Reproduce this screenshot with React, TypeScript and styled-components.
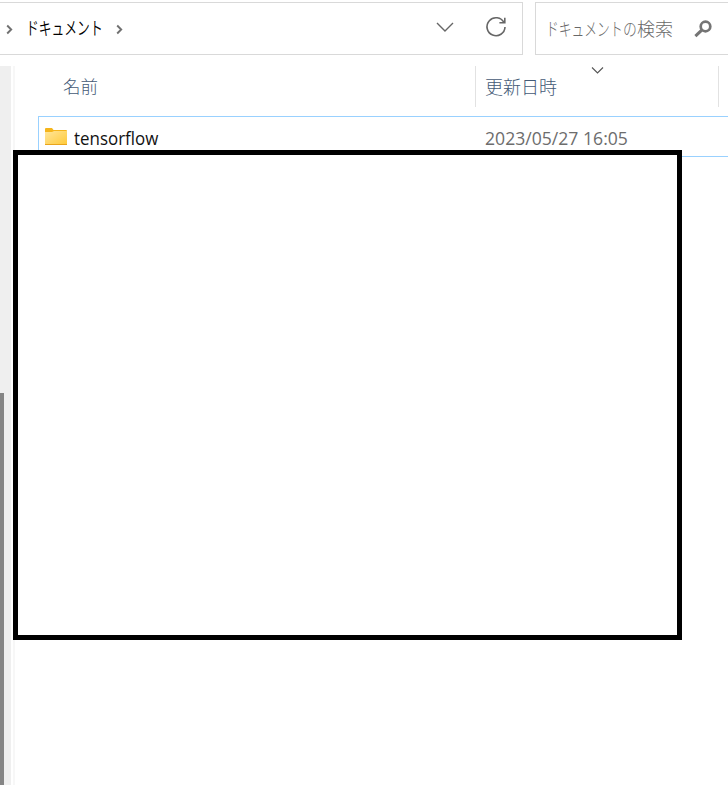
import React from "react";
import styled, { createGlobalStyle } from "styled-components";

const GlobalStyle = createGlobalStyle`
  * { box-sizing: border-box; }
  body { margin: 0; background: #fff; overflow: hidden; }
`;

const Explorer = styled.main`
  position: relative;
  width: 728px;
  height: 785px;
  padding-top: 2px;
  display: flex;
  flex-direction: column;
  overflow: hidden;
  background: #fff;
  font-family: "Open Sans", "Noto Sans", "Noto Sans CJK JP", sans-serif;
`;

const Toolbar = styled.header`
  display: flex;
  gap: 12px;
  height: 53px;
  flex: none;
`;

const AddressBar = styled.nav`
  width: 523px;
  flex: none;
  display: flex;
  align-items: center;
  border: 1px solid #d9d9d9;
  border-left: 0;
  padding: 0 16px 0 6px;
`;

const SearchBox = styled.div`
  flex: 1;
  display: flex;
  align-items: center;
  border: 1px solid #d9d9d9;
  border-right: 0;
  padding-left: 10px;
`;

const Label = styled.span<{
  $size: number;
  $color: string;
  $width: number;
  $scale?: number;
  $weight?: number;
}>`
  display: block;
  flex: none;
  width: ${(p) => p.$width}px;
  font-size: ${(p) => p.$size}px;
  line-height: 24px;
  font-weight: ${(p) => p.$weight ?? 400};
  color: ${(p) => p.$color};
  white-space: nowrap;
  transform: scaleX(${(p) => p.$scale ?? 1});
  transform-origin: left center;
`;

const JapaneseLabel = styled(Label)`
  font-family: "Noto Sans CJK JP", sans-serif;
`;

const Placeholder = styled.div`
  display: flex;
  width: 148px;
  flex: none;
  padding-bottom: 2px;
`;

const Icon = styled.svg`
  display: block;
  flex: none;
  fill: none;
  overflow: visible;
`;

const Crumb = styled.div`
  display: flex;
  align-items: center;
  gap: 13px;
  flex: 1;
`;

const CrumbName = styled(JapaneseLabel)`
  margin-bottom: 4px;
`;

const Actions = styled.div`
  display: flex;
  align-items: center;
  gap: 32px;
  padding-bottom: 4px;
`;

const Body = styled.div`
  flex: 1;
  display: flex;
  margin-top: 11px;
`;

const ScrollTrack = styled.div`
  width: 11px;
  padding-top: 327px;
  background: #efefef;
`;

const ScrollThumb = styled.div`
  width: 4px;
  height: 100%;
  background: #858585;
`;

const PaneDivider = styled.div`
  width: 2px;
  margin-left: 2px;
  background: #f7f7f7;
`;

const FileList = styled.section`
  flex: 1;
  padding-left: 23px;
`;

const Columns = styled.div`
  display: grid;
  grid-template-columns: 438px 243px 1fr;
  height: 41px;
`;

const ColumnHeader = styled.div`
  position: relative;
  display: flex;
  align-items: center;
  border-right: 1px solid #e2e2e2;
  padding-bottom: 1px;

  &:first-child { padding-left: 25px; }
  &:nth-child(2) { padding-left: 9px; }
  &:last-child { border: 0; }
`;

const SortMark = styled(Icon)`
  position: absolute;
  left: 116px;
  top: 1px;
`;

const FileRow = styled.div`
  display: grid;
  grid-template-columns: 446px 1fr;
  align-items: center;
  height: 41px;
  margin-top: 9px;
  border: 1px solid #99d1ff;
  border-right: 0;
  padding-top: 3px;
`;

const FileName = styled.div`
  display: flex;
  align-items: center;
  gap: 7px;
  padding-left: 6px;
`;

const FolderIcon = styled(Icon)`
  margin-top: -3px;
`;

const Cover = styled.div`
  position: absolute;
  left: 13px;
  top: 150px;
  width: 669px;
  height: 490px;
  border: 5px solid #000;
  background: #fff;
`;

const Chevron = () => (
  <Icon width="7" height="10" viewBox="0 0 7 10">
    <path d="M1.2 1.5 5.2 5.5 1.2 9.5" stroke="#707070" strokeWidth="1.9" />
  </Icon>
);

export default function App() {
  return (
    <>
      <GlobalStyle />
      <Explorer>
        <Toolbar>
          <AddressBar>
            <Crumb>
              <Chevron />
              <CrumbName $size={18} $color="#000" $width={77} $scale={0.71} $weight={350}>
                ドキュメント
              </CrumbName>
              <Chevron />
            </Crumb>
            <Actions>
              <Icon width="18" height="10" viewBox="0 0 18 10">
                <path d="M1 1 9 9 17 1" stroke="#666" strokeWidth="1.4" />
              </Icon>
              <Icon width="20" height="20" viewBox="0 0 20 20">
                <path
                  d="M18 5.6A9 9 0 1 0 19 10M18.8 .8V5.8H13.4"
                  stroke="#666"
                  strokeWidth="1.6"
                />
              </Icon>
            </Actions>
          </AddressBar>
          <SearchBox>
            <Placeholder>
              <JapaneseLabel $size={18} $color="#686868" $width={77} $scale={0.71} $weight={300}>
                ドキュメント
              </JapaneseLabel>
              <JapaneseLabel $size={18} $color="#686868" $width={14} $scale={0.77} $weight={300}>
                の
              </JapaneseLabel>
              <JapaneseLabel $size={18} $color="#686868" $width={37} $weight={300}>
                検索
              </JapaneseLabel>
            </Placeholder>
            <Icon width="18" height="18" viewBox="0 0 18 18">
              <circle cx="11.5" cy="6.5" r="4.8" stroke="#747474" strokeWidth="2.7" />
              <path d="M8 9.9 1.4 16.2" stroke="#747474" strokeWidth="3" />
            </Icon>
          </SearchBox>
        </Toolbar>
        <Body>
          <ScrollTrack>
            <ScrollThumb />
          </ScrollTrack>
          <PaneDivider />
          <FileList>
            <Columns>
              <ColumnHeader>
                <JapaneseLabel $size={17.5} $color="#445a76" $width={36} $weight={300}>
                  名前
                </JapaneseLabel>
              </ColumnHeader>
              <ColumnHeader>
                <JapaneseLabel $size={18} $color="#445a76" $width={72} $weight={300}>
                  更新日時
                </JapaneseLabel>
                <SortMark width="12" height="7" viewBox="0 0 12 7">
                  <path d="M0 .5 5.5 6 11 .5" stroke="#555" strokeWidth="1.1" />
                </SortMark>
              </ColumnHeader>
              <ColumnHeader />
            </Columns>
            <FileRow>
              <FileName>
                <FolderIcon width="22" height="17" viewBox="0 0 22 17">
                  <defs>
                    <linearGradient id="folder" x1="0" y1="0" x2="1" y2="1">
                      <stop stopColor="#ffe69b" />
                      <stop offset="1" stopColor="#ffc937" />
                    </linearGradient>
                  </defs>
                  <path d="M0 1q0-1 1-1h6l1.5 2H21q1 0 1 1v4H0Z" fill="#f5b51b" />
                  <path d="M0 4h7l2-1h13v14H0Z" fill="url(#folder)" />
                  <path d="M0 16.5h22" stroke="#e9a51c" />
                </FolderIcon>
                <Label $size={17.5} $color="#111" $width={84} $scale={0.967}>
                  tensorflow
                </Label>
              </FileName>
              <Label $size={17.5} $color="#6d6d6d" $width={143} $scale={1.006}>
                2023/05/27 16:05
              </Label>
            </FileRow>
          </FileList>
        </Body>
        <Cover />
      </Explorer>
    </>
  );
}
